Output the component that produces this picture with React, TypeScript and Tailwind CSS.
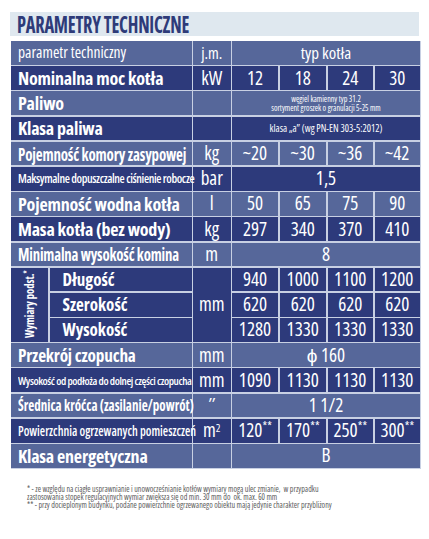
const MID = 'bg-[#56679a]';
const DARK = 'bg-[#2d3a7b]';

const cellBase = 'flex items-center text-white overflow-visible whitespace-nowrap';
const valCell = `${cellBase} justify-center text-[19px] leading-none`;

type Row = {
  name: string;
  nameClass?: string;
  unit: React.ReactNode;
  values: React.ReactNode[] | React.ReactNode;
  bg: string;
};

const rows: Row[] = [
  { name: 'Nominalna moc kotła', unit: 'kW', values: ['12', '18', '24', '30'], bg: DARK },
  {
    name: 'Paliwo',
    unit: '',
    values: (
      <div className="text-center text-[8px] leading-[9px]">
        węgiel kamienny typ 31.2
        <br />
        sortyment groszek o granulacji 5-25 mm
      </div>
    ),
    bg: MID,
  },
  {
    name: 'Klasa paliwa',
    unit: '',
    values: <span className="text-[10px]">klasa „a” (wg PN-EN 303-5:2012)</span>,
    bg: DARK,
  },
  {
    name: 'Pojemność komory zasypowej',
    nameClass: 'text-[18px] tracking-[-0.2px] scale-x-[0.83]',
    unit: 'kg',
    values: ['~20', '~30', '~36', '~42'],
    bg: MID,
  },
  {
    name: 'Maksymalne dopuszczalne ciśnienie robocze',
    nameClass: 'text-[12.5px] font-semibold tracking-[-0.4px] scale-x-[0.95]',
    unit: 'bar',
    values: '1,5',
    bg: DARK,
  },
  { name: 'Pojemność wodna kotła', unit: 'l', values: ['50', '65', '75', '90'], bg: MID },
  { name: 'Masa kotła (bez wody)', unit: 'kg', values: ['297', '340', '370', '410'], bg: DARK },
  {
    name: 'Minimalna wysokość komina',
    nameClass: 'text-[18px] tracking-[-0.2px] scale-x-[0.82]',
    unit: 'm',
    values: '8',
    bg: MID,
  },
];

const rowsBottom: Row[] = [
  {
    name: 'Przekrój czopucha',
    unit: 'mm',
    values: 'ϕ 160',
    nameClass: 'text-[18px] tracking-[-0.2px] scale-x-[0.96]',
    bg: MID,
  },
  {
    name: 'Wysokość od podłoża do dolnej części czopucha',
    nameClass: 'text-[11.5px] font-semibold tracking-[-0.4px] scale-x-[0.96]',
    unit: 'mm',
    values: ['1090', '1130', '1130', '1130'],
    bg: DARK,
  },
  {
    name: 'Średnica króćca (zasilanie/powrót)',
    nameClass: 'text-[16.5px] scale-x-[0.79]',
    unit: '″',
    values: '1 1/2',
    bg: MID,
  },
  {
    name: 'Powierzchnia ogrzewanych pomieszczeń',
    nameClass: 'text-[14px] font-semibold scale-x-[0.87]',
    unit: (
      <span>
        m<sup className="text-[11px]">2</sup>
      </span>
    ),
    values: ['120', '170', '250', '300'].map((v) => (
      <span key={v}>
        {v}
        <sup className="text-[12px]">**</sup>
      </span>
    )),
    bg: DARK,
  },
  { name: 'Klasa energetyczna', unit: '', values: 'B', bg: MID },
];

function GridRow({ row }: { row: Row }) {
  return (
    <>
      <div className={`${cellBase} ${row.bg} col-span-2 pl-[7px] font-bold`}>
        <span className={`inline-block origin-left leading-none ${row.nameClass ?? 'text-[18px] tracking-[-0.2px]'}`}>
          {row.name}
        </span>
      </div>
      <div className={`${valCell} ${row.bg}`}>{row.unit}</div>
      {Array.isArray(row.values) ? (
        row.values.map((v, i) => (
          <div key={i} className={`${valCell} ${row.bg}`}>
            {v}
          </div>
        ))
      ) : (
        <div className={`${valCell} ${row.bg} col-span-4`}>{row.values}</div>
      )}
    </>
  );
}

const dims = [
  { name: 'Długość', values: ['940', '1000', '1100', '1200'] },
  { name: 'Szerokość', values: ['620', '620', '620', '620'] },
  { name: 'Wysokość', values: ['1280', '1330', '1330', '1330'] },
];

export default function App() {
  return (
    <div className="w-[429px] h-[539px] bg-white font-['Open_Sans',sans-serif] font-stretch-[75%] pt-3 px-[10px]">
      <div className="h-6 bg-[#dfe8ef] flex items-center pl-[7px]">
        <h1 className="inline-block origin-left scale-x-[0.8] text-[23px] font-bold text-[#2e3b79] tracking-[-0.3px] leading-none whitespace-nowrap">
          PARAMETRY TECHNICZNE
        </h1>
      </div>

      <div className="mt-[5px] ml-px w-[410px] grid grid-cols-[37px_142px_37.5px_46px_46.5px_45.5px_45.5px] auto-rows-[23.7px] gap-[1.5px] pb-[1.5px] bg-[#c8d0e3]">
        <div className={`${cellBase} ${MID} col-span-2 pl-[7px] text-[15.5px]`}>parametr techniczny</div>
        <div className={`${cellBase} ${MID} justify-center text-[16px]`}>j.m.</div>
        <div className={`${cellBase} ${MID} col-span-4 justify-center text-[17px]`}>typ kotła</div>

        {rows.map((r) => (
          <GridRow key={r.name} row={r} />
        ))}

        {dims.map((d, i) => (
          <>
            {i === 0 && (
              <div key="wym" className={`${DARK} row-span-3 flex items-center justify-center text-white`}>
                <span className="block -rotate-90 scale-x-[0.85] whitespace-nowrap text-[12.5px] font-bold leading-none">
                  Wymiary podst.<sup className="text-[8px]">*</sup>
                </span>
              </div>
            )}
            <div key={d.name} className={`${cellBase} ${DARK} pl-[13px] text-[17px] font-bold`}>
              {d.name}
            </div>
            {i === 0 && (
              <div key="mm" className={`${valCell} ${DARK} row-span-3`}>
                mm
              </div>
            )}
            {d.values.map((v, j) => (
              <div key={`${d.name}${j}`} className={`${valCell} ${DARK}`}>
                {v}
              </div>
            ))}
          </>
        ))}

        {rowsBottom.map((r) => (
          <GridRow key={r.name} row={r} />
        ))}
      </div>

      <div className="mt-[16px] pl-[17px] text-[8px] leading-[8px] text-[#5c5c5c] font-stretch-[87.5%]">
        <p>
          * - ze względu na ciągłe usprawnianie i unowocześnianie kotłów wymiary mogą ulec zmianie,&nbsp; w
          przypadku
        </p>
        <p>zastosowania stopek regulacyjnych wymiar zwiększa się od min. 30 mm do&nbsp; ok. max. 60 mm</p>
        <p>
          ** - przy docieplonym budynku, podane powierzchnie ogrzewanego obiektu mają jedynie charakter
          przybliżony
        </p>
      </div>
    </div>
  );
}
